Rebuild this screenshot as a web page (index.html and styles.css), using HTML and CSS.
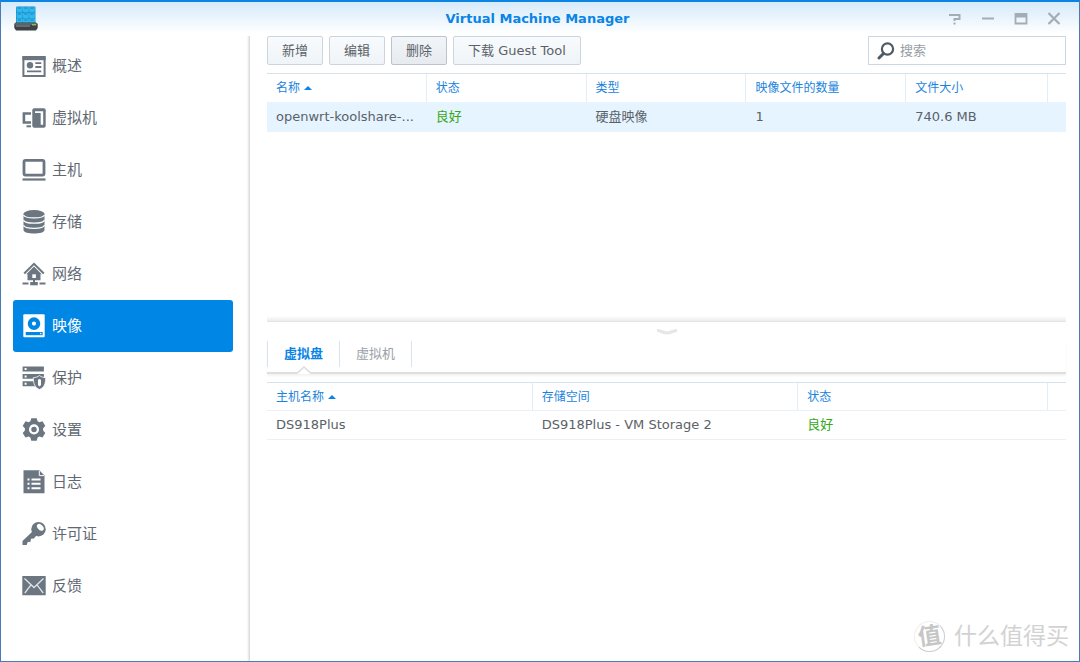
FILE: index.html
```html
<!DOCTYPE html>
<html lang="zh-CN">
<head>
<meta charset="utf-8">
<title>Virtual Machine Manager</title>
<link rel="stylesheet" href="styles.css">
</head>
<body>
<div class="window">
  <header class="titlebar">
    <svg class="app-icon" viewBox="0 0 24 26" aria-hidden="true">
      <rect x="2" y="0.5" width="19.500" height="18" rx="1" fill="#2494cc"/>
      <g fill="#2fb9ee">
        <rect x="2.800" y=".8" width="5.700" height="5.300" rx="1"/><rect x="9" y=".8" width="5.700" height="5.300" rx="1"/><rect x="15.200" y=".8" width="5.700" height="5.300" rx="1"/>
        <rect x="2.800" y="6.700" width="5.700" height="5.300" rx="1"/><rect x="9" y="6.700" width="5.700" height="5.300" rx="1"/><rect x="15.200" y="6.700" width="5.700" height="5.300" rx="1"/>
        <rect x="2.800" y="12.500" width="5.700" height="5.300" rx="1"/><rect x="9" y="12.500" width="5.700" height="5.300" rx="1"/><rect x="15.200" y="12.500" width="5.700" height="5.300" rx="1"/>
      </g>
      <path d="M4 2h3M10.300 2h3M16.500 2h3M4 8h3M10.300 8h3M16.500 8h3M4 14h3M10.300 14h3M16.500 14h3" stroke="#1a7fc0" stroke-width="1"/>
      <path d="M1.500 16.500h20.500l1.700 1.500v4l-1.700 2.500H2L.3 22v-4z" fill="#3b4145"/>
      <path d="M.8 17h22.400v2H.8z" fill="#59636a"/>
      <path d="M2 20h14" stroke="#90989d" stroke-width="1"/>
      <path d="M18 18.800h4" stroke="#a9c84a" stroke-width="1.200"/>
    </svg>
    <h1 class="title">Virtual Machine Manager</h1>
    <div class="window-controls">
      <button type="button" aria-label="帮助"><svg viewBox="0 0 14 14"><path d="M1 3h10.500v4H6.500v2M6.500 10.500v2" fill="none" stroke="#a3adb7" stroke-width="2"/></svg></button>
      <button type="button" aria-label="最小化"><svg viewBox="0 0 14 14"><path d="M1 6.500h12" stroke="#a3adb7" stroke-width="2"/></svg></button>
      <button type="button" aria-label="最大化"><svg viewBox="0 0 14 14"><path d="M1.500 2h11v9.500h-11z" fill="none" stroke="#a3adb7" stroke-width="1.800"/><path d="M1 3.500h12" stroke="#a3adb7" stroke-width="4"/></svg></button>
      <button type="button" aria-label="关闭"><svg viewBox="0 0 14 14"><path d="M1.500 1l11 11M12.500 1l-11 11" stroke="#a3adb7" stroke-width="2.200"/></svg></button>
    </div>
  </header>

  <div class="body">
    <nav class="sidebar">
      <a class="nav-item" href="#overview">
        <svg viewBox="0 0 24 24"><path d="M1.400 3h21.200v19H1.400z" fill="none" stroke="#6b7681" stroke-width="2"/><path d="M.4 4.300h23.200" stroke="#6b7681" stroke-width="3.800"/><circle cx="8" cy="11.300" r="3.200" fill="#6b7681"/><path d="M13.300 9.200h6M13.300 13h6M5 17.400h14.200" stroke="#6b7681" stroke-width="1.800"/></svg>
        概述</a>
      <a class="nav-item" href="#vm">
        <svg viewBox="0 0 24 24"><path d="M9 7.500H1.900v9H9" fill="none" stroke="#6b7681" stroke-width="2.600"/><path d="M4.500 20.300H9" stroke="#6b7681" stroke-width="2"/><rect x="10.300" y="2.300" width="13.400" height="19.500" rx="2" fill="#6b7681"/><path d="M13 5.200h8.200v13.500h-2.500V7H13z" fill="#fff"/></svg>
        虚拟机</a>
      <a class="nav-item" href="#host">
        <svg viewBox="0 0 24 24"><rect x="2" y="2.300" width="20" height="14.800" rx="1.500" fill="none" stroke="#6b7681" stroke-width="2.800"/><path d="M.5 21.500h23" stroke="#6b7681" stroke-width="2.200"/></svg>
        主机</a>
      <a class="nav-item" href="#storage">
        <svg viewBox="0 0 24 24"><path d="M1.500 3.800v16.200c0 4.800 21 4.800 21 0V3.800z" fill="#6b7681"/><ellipse cx="12" cy="3.700" rx="10.500" ry="3.600" fill="#6b7681"/><path d="M1.500 4.800c1 4 20 4 21 0M1.500 10c1 4.200 20 4.200 21 0M1.500 15.200c1 4.200 20 4.200 21 0" fill="none" stroke="#fff" stroke-width="1.200"/></svg>
        存储</a>
      <a class="nav-item" href="#network">
        <svg viewBox="0 0 24 24"><path d="M2.200 11.500L12 1.900l9.800 9.600" fill="none" stroke="#6b7681" stroke-width="2"/><path d="M12 4.600l7.700 7.600h-1.200v6H5.500v-6H4.300z" fill="#6b7681"/><path d="M10.300 12.300h3.600v3.700h-3.600z" fill="#fff"/><path d="M.5 21.400h6M17.500 21.400h6M12 17v4" stroke="#6b7681" stroke-width="2"/><path d="M8.200 20h7.600v3.300H8.200z" fill="#6b7681"/></svg>
        网络</a>
      <a class="nav-item active" href="#image" aria-current="page">
        <svg viewBox="0 0 24 24"><rect x="1.300" y=".3" width="21.400" height="23" rx="1" fill="#fff"/><circle cx="12" cy="9.600" r="4.200" fill="none" stroke="#0086e5" stroke-width="4.200"/><path d="M3.700 18h17v3.200h-17z" fill="#0086e5"/><circle cx="18.800" cy="19.600" r=".8" fill="#fff"/></svg>
        映像</a>
      <a class="nav-item" href="#protection">
        <svg viewBox="0 0 24 24"><path d="M.6.400h21.300v5H.6zM.6 8h21.300v4.800H.6zM.6 15.200h21.300v5H.6z" fill="#6b7681"/><path d="M2.600 2h2v2h-2zM2.600 9.500h2v2h-2zM2.600 16.700h2v2h-2z" fill="#fff"/><path d="M17.500 9.500c1.800 1.500 4 2 6.200 2.200 0 6-1.500 9.800-6.200 11.800-4.700-2-6.200-5.800-6.200-11.800 2.200-.2 4.400-.7 6.200-2.200z" fill="#6b7681" stroke="#fff" stroke-width=".8"/><path d="M17.500 13l1.500.8v5.200l-1.500 1.600-1.500-1.600v-5.200z" fill="#fff"/></svg>
        保护</a>
      <a class="nav-item" href="#settings">
        <svg viewBox="0 0 24 24"><path d="M9.300.2h5.400l.9 3 1.800 1 3.100-.9 2.800 4.600-2.200 2.300v2.400l2.200 2.300-2.800 4.600-3.100-.9-1.800 1-.9 3.200H9.300l-.9-3.200-1.800-1-3.100.9-2.800-4.600 2.200-2.300v-2.400L.7 7.900l2.800-4.600 3.100.9 1.800-1z" fill="#6b7681"/><circle cx="12" cy="11.400" r="3.900" fill="#6b7681" stroke="#fff" stroke-width="2.300"/></svg>
        设置</a>
      <a class="nav-item" href="#log">
        <svg viewBox="0 0 24 24"><path d="M1.500.2h15.800l5.200 5.300v17.700h-21z" fill="#6b7681"/><path d="M17.300.8v4.800h4.800" fill="none" stroke="#fff" stroke-width="1"/><path d="M5.500 9.500h2M9.500 9.500h9M5.500 13.800h2M9.500 13.800h9M5.500 18.200h2M9.500 18.200h9" stroke="#fff" stroke-width="2"/></svg>
        日志</a>
      <a class="nav-item" href="#license">
        <svg viewBox="0 0 24 24"><path d="M10.500 9.500L.5 19v4h4.200l1-3 2.800-.3.500-3 2.800-.2 2.700-3z" fill="#6b7681"/><circle cx="16.500" cy="7.200" r="7.200" fill="#6b7681"/><ellipse cx="18.300" cy="5.300" rx="4" ry="2.600" transform="rotate(45 18.300 5.300)" fill="#fff"/></svg>
        许可证</a>
      <a class="nav-item" href="#feedback">
        <svg viewBox="0 0 24 24"><rect x=".3" y="2" width="23.400" height="19.200" rx=".5" fill="#6b7681"/><path d="M2.500 4.500l9.500 9 9.500-9M2.800 19l6-7.800M21.200 19l-6-7.800" fill="none" stroke="#dfe2e5" stroke-width="1.300"/></svg>
        反馈</a>
    </nav>

    <main class="main">
      <div class="toolbar">
        <button class="btn" type="button">新增</button>
        <button class="btn" type="button">编辑</button>
        <button class="btn pressed" type="button">删除</button>
        <button class="btn" type="button">下载 Guest Tool</button>
        <label class="search">
          <svg viewBox="0 0 18 18" aria-hidden="true"><circle cx="10.500" cy="7" r="5.600" fill="none" stroke="#4f5a64" stroke-width="2.200"/><path d="M6.500 11.500L2 16" stroke="#4f5a64" stroke-width="3" stroke-linecap="round"/></svg>
          <input type="search" placeholder="搜索" aria-label="搜索">
        </label>
      </div>

      <div class="panes">
        <section class="pane images">
          <table class="grid">
            <colgroup><col class="fifth"><col class="fifth"><col class="fifth"><col class="fifth"><col><col class="gutter"></colgroup>
            <thead>
              <tr><th>名称<span class="sort"></span></th><th>状态</th><th>类型</th><th>映像文件的数量</th><th>文件大小</th><td></td></tr>
            </thead>
            <tbody>
              <tr class="selected"><td>openwrt-koolshare-...</td><td class="good">良好</td><td>硬盘映像</td><td>1</td><td>740.6 MB</td><td></td></tr>
            </tbody>
          </table>
        </section>

        <section class="pane details">
          <button class="collapse" type="button" aria-label="收起"><svg viewBox="0 0 22 6"><path d="M1 1.500c4 0 6 2.500 10 2.500s6-2.500 10-2.500" fill="none" stroke="#e6e6e6" stroke-width="3"/></svg></button>
          <div class="tabs" role="tablist">
            <button class="tab current" type="button" role="tab" aria-selected="true">虚拟盘<svg class="notch" viewBox="0 0 16 8" aria-hidden="true"><path d="M0 8L1 7L8 1L15 7L16 8z" fill="#fff"/><path d="M0 7h1.500L8 1l6.500 6H16" fill="none" stroke="#dcdcdc" stroke-width="1.500"/></svg></button>
            <button class="tab" type="button" role="tab" aria-selected="false">虚拟机</button>
          </div>
          <table class="grid plain">
            <colgroup><col class="third"><col class="third"><col><col class="gutter"></colgroup>
            <thead>
              <tr><th>主机名称<span class="sort"></span></th><th>存储空间</th><th>状态</th><td></td></tr>
            </thead>
            <tbody>
              <tr><td>DS918Plus</td><td>DS918Plus - VM Storage 2</td><td class="good">良好</td><td></td></tr>
            </tbody>
          </table>
        </section>
      </div>
    </main>
  </div>

  <div class="watermark"><span class="seal"><span class="seal-mark">值</span></span><span>什么值得买</span></div>
</div>
</body>
</html>
```

FILE: styles.css
```css
* {
  box-sizing: border-box;
}

body {
  margin: 0;
  color: #5a6268;
  font: 13px/20px "DejaVu Sans", "Noto Sans CJK SC", sans-serif;
}

button {
  margin: 0;
  padding: 0;
  border: 0;
  background: none;
  color: inherit;
  font: inherit;
}

.window {
  position: relative;
  display: flex;
  flex-direction: column;
  min-height: 100vh;
  border: 1px solid #4a7ab8;
  border-top: 2px solid #0b84e4;
  background: linear-gradient(#d6eafa, #fff 32px) #fff;
}

.titlebar {
  display: grid;
  grid-template-columns: 1fr auto 1fr;
  align-items: center;
  height: 34px;
  padding: 0 18px 0 13px;
}

.app-icon {
  width: 24px;
  height: 26px;
}

.title {
  margin: 0;
  color: #0a84e6;
  font-size: 13px;
  line-height: 32px;
}

.window-controls {
  display: flex;
  justify-content: flex-end;
  gap: 19px;
}

.window-controls svg {
  display: block;
  width: 14px;
  height: 14px;
}

.body {
  display: flex;
  flex: 1;
}

.sidebar {
  flex: 0 0 249px;
  padding: 4px 16px 4px 12px;
  border-right: 1px solid #dcdcdc;
  box-shadow: inset -3px 0 2px -2px #e4e4e4;
}

.nav-item {
  display: flex;
  align-items: center;
  gap: 6px;
  height: 52px;
  padding: 0 9px;
  border-radius: 3px;
  color: #5f6973;
  font-size: 15px;
  text-decoration: none;
}

.nav-item svg {
  width: 24px;
  height: 24px;
}

.nav-item.active {
  background: #0086e5;
  color: #fff;
}

.main {
  display: flex;
  flex: 1;
  flex-direction: column;
  min-width: 0;
  padding: 0 13px 0 17px;
}

.toolbar {
  display: flex;
  gap: 6px;
  margin-bottom: 8px;
}

.btn {
  height: 29px;
  padding: 0 14px;
  border: 1px solid #cbd5de;
  border-radius: 2px;
  background: linear-gradient(#f8fbfd, #eff4f8);
}

.btn.pressed {
  border-color: #bac4ce;
  background: linear-gradient(#f2f5f8, #e6ebf0);
}

.search {
  display: flex;
  align-items: center;
  gap: 5px;
  width: 198px;
  height: 29px;
  margin-left: auto;
  padding: 0 8px;
  border: 1px solid #cbd8e4;
  background: #fff;
}

.search svg {
  flex: none;
  width: 18px;
  height: 18px;
}

.search input {
  flex: 1;
  min-width: 0;
  padding: 0;
  border: 0;
  outline: 0;
  background: none;
  font: inherit;
}

.search input::placeholder {
  color: #969da4;
}

.panes {
  display: grid;
  flex: 1;
  grid-template-rows: 25fr 34fr;
}

.images {
  border-bottom: 1px solid #e4e4e4;
  background: linear-gradient(#fff, #ececec) bottom / 100% 5px no-repeat;
}

.grid {
  width: 100%;
  border-top: 1px solid #d5e3ec;
  border-spacing: 0;
  table-layout: fixed;
}

.fifth {
  width: 20%;
}

.third {
  width: 33.25%;
}

.gutter {
  width: 18px;
}

.grid th,
.grid td {
  height: 29px;
  padding: 0 9px;
  overflow: hidden;
  text-align: left;
  white-space: nowrap;
}

.grid thead th,
.grid thead td {
  height: 28px;
}

.grid th {
  border-right: 1px solid #e3edf5;
  color: #1a84dc;
  font-size: 12px;
  font-weight: 400;
}

.grid .selected td {
  height: 30px;
  background: #e6f4ff;
}

.plain th,
.plain td {
  border-bottom: 1px solid #eaf1f6;
}

.grid .good {
  color: #36a818;
}

.sort {
  display: inline-block;
  margin-left: 4px;
  border: 4px solid transparent;
  border-top: 0;
  border-bottom-color: #0a84e6;
  vertical-align: 2px;
}

.collapse {
  display: block;
  margin: 0 auto;
  padding: 7px 0 6px;
}

.collapse svg {
  display: block;
  width: 22px;
  height: 6px;
}

.tabs {
  display: flex;
  height: 33px;
  margin-bottom: 8px;
  padding-bottom: 5px;
  border-bottom: 2px solid #dedede;
  box-shadow: 0 2px 2px #f3f3f3;
}

.tab {
  position: relative;
  padding: 0 16px;
  border-right: 1px solid #d9e5ee;
  color: #9aa1a8;
}

.tab.current {
  border-left: 1px solid #d9e5ee;
  color: #0a84e6;
  font-weight: 700;
}

.notch {
  position: absolute;
  bottom: -7px;
  left: 50%;
  width: 16px;
  height: 8px;
  margin-left: -8px;
}

.watermark {
  position: absolute;
  right: 10px;
  bottom: 9px;
  display: flex;
  align-items: center;
  gap: 9px;
  color: #d2d2d2;
  font-size: 23px;
  line-height: 32px;
}

.seal {
  width: 31px;
  height: 31px;
  border: 1px solid #eee;
  border-right-color: #ccc;
  border-bottom-color: #ccc;
  border-radius: 50%;
  line-height: 28px;
  text-align: center;
}

.seal-mark {
  display: inline-block;
  color: #c6c6c6;
  font-weight: 700;
  transform: rotate(-8deg);
}
```
